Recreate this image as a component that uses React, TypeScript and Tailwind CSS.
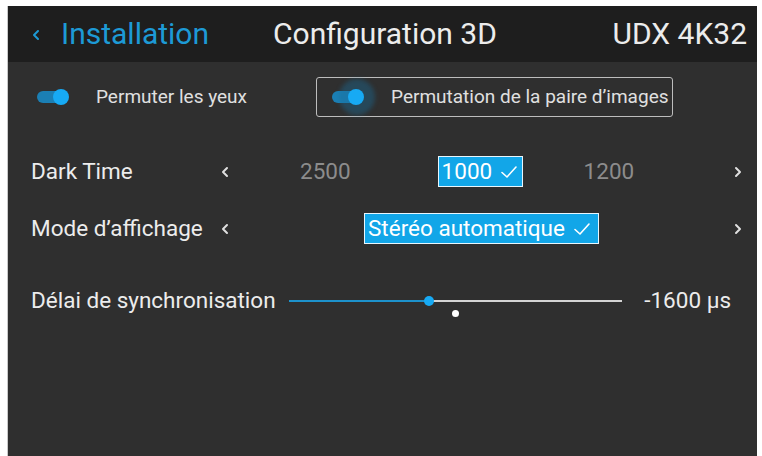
import React from "react";

/* =====================================================
   Small UI helpers
===================================================== */

function Chevron({ dir = "left", className = "" }: { dir?: "left" | "right"; className?: string }) {
  return (
    <svg width="8" height="12" viewBox="0 0 8 12" className={className}>
      <polyline
        points={dir === "left" ? "6,2 2,6 6,10" : "2,2 6,6 2,10"}
        fill="none"
        stroke="currentColor"
        strokeWidth="2"
        strokeLinecap="round"
        strokeLinejoin="round"
      />
    </svg>
  );
}

function Check() {
  return (
    <svg width="18" height="16" viewBox="0 0 18 16" className="ml-[8px]">
      <polyline points="2,8.5 7,13 16,3" fill="none" stroke="white" strokeWidth="1.6" strokeLinecap="round" strokeLinejoin="round" />
    </svg>
  );
}

function Toggle({ glow = false }: { glow?: boolean }) {
  return (
    <div className="relative h-[18px] w-[32px]">
      <div className="absolute left-0 top-[3px] h-[12px] w-[30px] rounded-full bg-[#1b7fb4]" />
      {glow && <div className="absolute left-[7px] top-[-9px] h-[36px] w-[36px] rounded-full bg-[#1a6e9a]/40 blur-[2px]" />}
      <div className="absolute left-[16px] top-[1px] h-[16px] w-[16px] rounded-full bg-[#17aaf4]" />
    </div>
  );
}

function Highlight({ children, className = "" }: { children: React.ReactNode; className?: string }) {
  return (
    <div className={`flex h-[31px] items-center border border-[#e8f6fd] bg-[#12a6e8] pl-[3px] text-white ${className}`}>
      {children}
      <Check />
    </div>
  );
}

/* =====================================================
   Page
===================================================== */

export default function App() {
  return (
    <div className="h-[456px] w-[762px] overflow-hidden bg-white pl-[7px] pr-[5px] pt-[6px] font-['Roboto',sans-serif]">
      <div className="flex h-[450px] flex-col border-l border-[#c9c9c9] bg-[#2f2f2f]">
        {/* HEADER */}
        <div className="flex h-[56px] items-center bg-[#1e1e1e] pl-[24px] pr-[10px] text-[30px] leading-none">
          <div className="flex w-[241px] items-center text-[#1d9ad6]">
            <Chevron className="mr-[21px] mt-[2px]" />
            <span>Installation</span>
          </div>
          <div className="text-[#ececec]">Configuration 3D</div>
          <div className="flex-1 text-right text-[#ececec]">UDX 4K32</div>
        </div>

        {/* TOGGLES */}
        <div className="mt-[15px] flex h-[40px] items-center pl-[29px]">
          <Toggle />
          <span className="ml-[27px] text-[19px] text-[#e0e0e0]">Permuter les yeux</span>
          <div className="ml-[69px] flex h-[40px] w-[357px] items-center rounded-[3px] border border-[#bdbdbd] pl-[15px]">
            <Toggle glow />
            <span className="ml-[27px] text-[19px] text-[#e0e0e0]">Permutation de la paire d’images</span>
          </div>
        </div>

        {/* DARK TIME */}
        <div className="mt-[39px] flex h-[31px] items-center pl-[23px] pr-[15px] text-[22.5px]">
          <span className="w-[190px] text-[#ececec]">Dark Time</span>
          <Chevron className="text-[#e0e0e0]" />
          <span className="ml-[71px] text-[#8c8c8c]">2500</span>
          <Highlight className="ml-[87px] w-[85px]">1000</Highlight>
          <span className="ml-[61px] text-[#8c8c8c]">1200</span>
          <div className="flex flex-1 justify-end">
            <Chevron dir="right" className="text-[#e0e0e0]" />
          </div>
        </div>

        {/* MODE D'AFFICHAGE */}
        <div className="mt-[26px] flex h-[31px] items-center pl-[23px] pr-[15px] text-[22.5px]">
          <span className="w-[190px] text-[#ececec]">Mode d’affichage</span>
          <Chevron className="text-[#e0e0e0]" />
          <Highlight className="ml-[135px] w-[235px]">Stéréo automatique</Highlight>
          <div className="flex flex-1 justify-end">
            <Chevron dir="right" className="text-[#e0e0e0]" />
          </div>
        </div>

        {/* DELAI */}
        <div className="mt-[42px] flex h-[30px] items-center pl-[23px] pr-[26px] text-[22.5px]">
          <span className="w-[258px] text-[#ececec]">Délai de synchronisation</span>
          <div className="relative h-[30px] w-[333px]">
            <div className="absolute left-0 top-[14px] h-[2px] w-[140px] bg-[#1d92cc]" />
            <div className="absolute left-[140px] top-[14px] h-[2px] w-[193px] bg-[#d4d4d4]" />
            <div className="absolute left-[135px] top-[10px] h-[10px] w-[10px] rounded-full bg-[#17aaf4]" />
            <div className="absolute left-[163px] top-[24px] h-[7px] w-[7px] rounded-full bg-white" />
          </div>
          <span className="flex-1 text-right text-[#ececec]">-1600 µs</span>
        </div>
      </div>
    </div>
  );
}
